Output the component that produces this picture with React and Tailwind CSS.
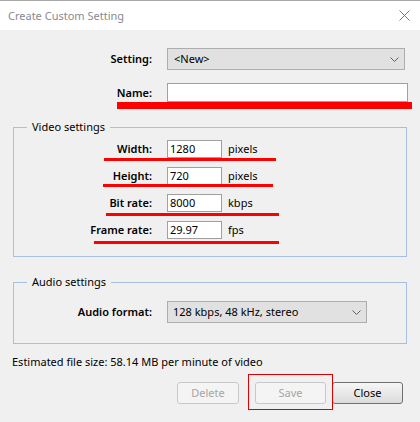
import React from 'react';

const videoRows = [
  { label: 'Width:', value: '1280', unit: 'pixels', line: 'top-[18px] left-[90px] w-[172px]' },
  { label: 'Height:', value: '720', unit: 'pixels', line: 'top-[17px] left-[89px] w-[170px]' },
  { label: 'Bit rate:', value: '8000', unit: 'kbps', line: 'top-[19px] left-[92px] w-[173px]' },
  { label: 'Frame rate:', value: '29.97', unit: 'fps', line: 'top-[20px] left-[80px] w-[185px]' },
];

function Chevron() {
  return (
    <svg width="9" height="5" viewBox="0 0 9 5" className="shrink-0">
      <path d="M0.5 0.5 L4.5 4.5 L8.5 0.5" fill="none" stroke="#606060" strokeWidth="1" />
    </svg>
  );
}

export default function App() {
  return (
    <div className="w-[420px] h-[422px] bg-[#f0f0f0] font-['Noto_Sans',sans-serif] text-[11px] leading-[16px] text-black overflow-hidden">
      {/* title bar */}
      <div className="h-[30px] bg-white border-t border-[#a8a8a8] flex items-center justify-between pl-[8px] pr-[10px]">
        <span className="text-[#8a8a94]">Create Custom Setting</span>
        <svg width="11" height="11" viewBox="0 0 11 11">
          <path d="M0.5 0.5 L10.5 10.5 M10.5 0.5 L0.5 10.5" stroke="#7a7a7a" strokeWidth="1" />
        </svg>
      </div>

      {/* setting */}
      <div className="mt-[18px] flex items-center">
        <div className="w-[152px] text-right font-semibold">Setting:</div>
        <div className="ml-[15px] w-[238px] h-[22px] bg-[#e1e1e1] border border-[#adadad] flex items-center justify-between pl-[6px] pr-[5px]">
          <span>&lt;New&gt;</span>
          <Chevron />
        </div>
      </div>

      {/* name */}
      <div className="relative mt-[13px] flex items-center">
        <div className="w-[152px] text-right font-semibold">Name:</div>
        <div className="ml-[15px] w-[241px] h-[19px] bg-white border border-[#a0a0a0]"></div>
        <div className="absolute top-[19px] left-[117px] w-[295px] h-[7px] bg-[#ff0000]"></div>
      </div>

      {/* video settings */}
      <fieldset className="mt-[17px] ml-[13px] w-[394px] border border-[#a6bfe3] pt-[5px] pb-[17px]">
        <legend className="ml-[13px] px-[5px] leading-[16px]">Video settings</legend>
        <div className="flex flex-col gap-[9px]">
          {videoRows.map(row => (
            <div key={row.label} className="relative h-[18px] flex items-center">
              <div className="w-[138px] text-right font-semibold">{row.label}</div>
              <div className="ml-[15px] w-[55px] h-[18px] bg-white border border-[#a0a0a0] pl-[2px] flex items-center">{row.value}</div>
              <span className="ml-[6px]">{row.unit}</span>
              <div className={`absolute h-[3px] bg-[#ff0000] ${row.line}`}></div>
            </div>
          ))}
        </div>
      </fieldset>

      {/* audio settings */}
      <fieldset className="mt-[17px] ml-[13px] w-[394px] border border-[#a6bfe3] pt-[11px] pb-[20px]">
        <legend className="ml-[13px] px-[5px] leading-[16px]">Audio settings</legend>
        <div className="flex items-center">
          <div className="w-[138px] text-right font-semibold">Audio format:</div>
          <div className="ml-[15px] w-[200px] h-[22px] bg-[#e1e1e1] border border-[#adadad] flex items-center justify-between pl-[5px] pr-[5px]">
            <span>128 kbps, 48 kHz, stereo</span>
            <Chevron />
          </div>
        </div>
      </fieldset>

      <div className="mt-[10px] pl-[12px]">Estimated file size: 58.14 MB per minute of video</div>

      {/* buttons */}
      <div className="mt-[12px] pl-[177px] flex">
        <div className="w-[62px] h-[22px] rounded-[3px] border border-[#c8c8c8] bg-[#f4f4f4] text-[#a6a6a6] flex items-center justify-center">Delete</div>
        <div className="relative ml-[16px] w-[71px] h-[22px] rounded-[3px] border border-[#c8c8c8] bg-[#f4f4f4] text-[#a6a6a6] flex items-center justify-center">
          Save
          <div className="absolute -left-[8px] -top-[9px] w-[85px] h-[36px] border border-[#e00000]"></div>
        </div>
        <div className="ml-[6px] w-[71px] h-[22px] rounded-[3px] border border-[#707070] bg-gradient-to-b from-[#f6f6f6] to-[#dcdcdc] flex items-center justify-center">Close</div>
      </div>
    </div>
  );
}
